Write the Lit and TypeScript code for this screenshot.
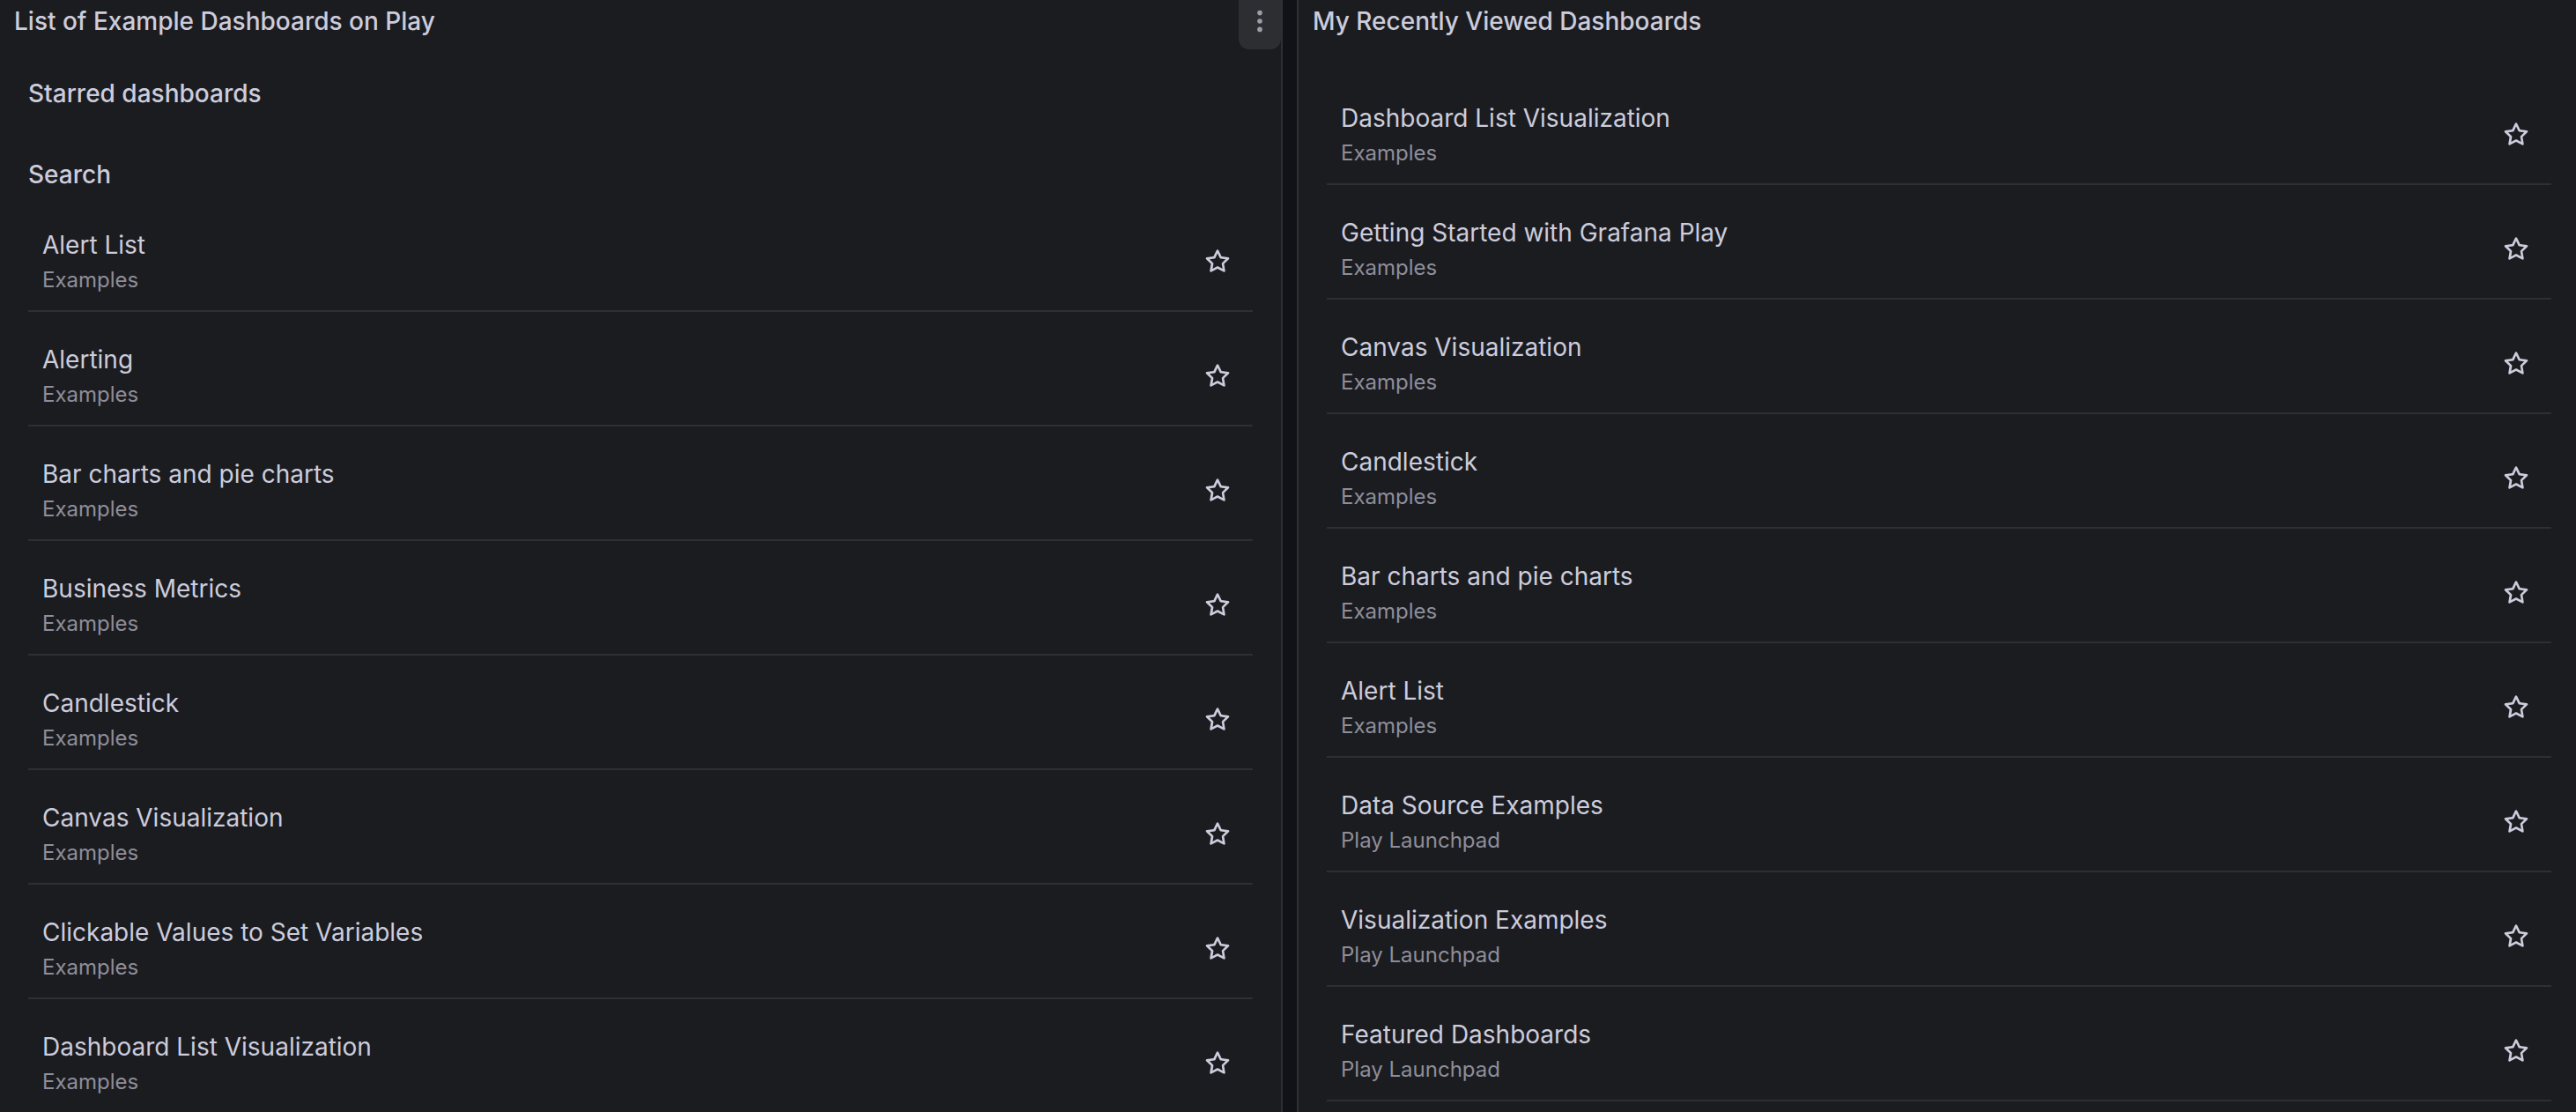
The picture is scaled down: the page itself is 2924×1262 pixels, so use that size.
import { LitElement, html, css } from "lit";
import { customElement, property } from "lit/decorators.js";

interface Dashboard {
  title: string;
  folder: string;
}

const inFolder = (folder: string, titles: string[]): Dashboard[] =>
  titles.map((title) => ({ title, folder }));

const searchResults: Dashboard[] = inFolder("Examples", [
  "Alert List",
  "Alerting",
  "Bar charts and pie charts",
  "Business Metrics",
  "Candlestick",
  "Canvas Visualization",
  "Clickable Values to Set Variables",
  "Dashboard List Visualization",
]);

const recentlyViewed: Dashboard[] = [
  ...inFolder("Examples", [
    "Dashboard List Visualization",
    "Getting Started with Grafana Play",
    "Canvas Visualization",
    "Candlestick",
    "Bar charts and pie charts",
    "Alert List",
  ]),
  ...inFolder("Play Launchpad", [
    "Data Source Examples",
    "Visualization Examples",
    "Featured Dashboards",
  ]),
];

@customElement("dashboard-list")
export class DashboardList extends LitElement {
  @property({ attribute: false }) items: Dashboard[] = [];

  static styles = css`
    :host {
      display: block;
    }
    .list {
      list-style: none;
      margin: 0;
      padding: 0;
    }
    .row {
      display: flex;
      align-items: center;
      justify-content: space-between;
      padding: 32px 24px 16px 16px;
      border-bottom: 2px solid #2e2f33;
    }
    .text {
      display: flex;
      flex-direction: column;
      align-items: flex-start;
      min-width: 0;
    }
    .link {
      color: #ccccdc;
      font-size: 28px;
      line-height: 44px;
      text-decoration: none;
    }
    .link:hover {
      text-decoration: underline;
    }
    .folder {
      color: #8e8e9a;
      font-size: 24px;
      line-height: 36px;
    }
    .star {
      display: flex;
      flex: none;
      padding: 0;
      border: 0;
      background: none;
      color: #ccccdc;
      cursor: pointer;
    }
    .icon {
      width: 32px;
      height: 32px;
      fill: currentColor;
    }
  `;

  render() {
    return html`<ul class="list">
      ${this.items.map(
        (item) => html`<li class="row">
          <div class="text">
            <a class="link" href="#">${item.title}</a>
            <span class="folder">${item.folder}</span>
          </div>
          <button class="star" type="button" aria-label="Mark ${item.title} as favorite">
            <svg class="icon" viewBox="0 0 24 24" aria-hidden="true">
              <path
                d="M22,9.67A1,1,0,0,0,21.14,9l-5.69-.83L12.9,3a1,1,0,0,0-1.8,0L8.55,8.16,2.86,9a1,1,0,0,0-.81.68,1,1,0,0,0,.25,1l4.13,4-1,5.68A1,1,0,0,0,6.9,21.44L12,18.77l5.1,2.67a.93.93,0,0,0,.46.12,1,1,0,0,0,.59-.19,1,1,0,0,0,.4-1l-1-5.68,4.13-4A1,1,0,0,0,22,9.67Zm-6.15,4a1,1,0,0,0-.29.88l.72,4.2-3.76-2a1.06,1.06,0,0,0-.94,0l-3.76,2,.72-4.2a1,1,0,0,0-.29-.88l-3-3,4.21-.61a1,1,0,0,0,.76-.55L12,5.7l1.88,3.82a1,1,0,0,0,.76.55l4.21.61Z"
              />
            </svg>
          </button>
        </li>`
      )}
    </ul>`;
  }
}

@customElement("app-root")
export class AppRoot extends LitElement {
  static styles = css`
    :host {
      display: block;
      height: 100vh;
      overflow: hidden;
      background: #111217;
      color: #ccccdc;
      font-family: Inter, "Liberation Sans", sans-serif;
      font-size: 28px;
      line-height: 44px;
    }
    .board {
      display: grid;
      grid-template-columns: 1fr 1fr;
      gap: 16px;
      height: 100%;
      margin-right: -4px;
    }
    .panel {
      min-width: 0;
      background: #1b1c20;
      overflow: hidden;
    }
    .first {
      border-right: 2px solid #2e2f33;
    }
    .second {
      border-left: 2px solid #2e2f33;
    }
    .header {
      display: flex;
      align-items: flex-start;
      justify-content: space-between;
      height: 56px;
      padding-left: 16px;
    }
    .title,
    .section {
      margin: 0;
      font-size: 28px;
      font-weight: 500;
      line-height: 44px;
    }
    .title {
      padding-top: 2px;
    }
    .menu {
      display: flex;
      align-items: flex-start;
      justify-content: center;
      width: 48px;
      height: 56px;
      padding: 8px 0 0;
      border: 0;
      border-radius: 0 0 12px 12px;
      background: #2d2e32;
      color: #9d9da8;
      cursor: pointer;
    }
    .dots {
      width: 32px;
      height: 32px;
      fill: currentColor;
    }
    .content {
      padding: 28px 32px 0;
    }
    .section {
      padding-bottom: 48px;
    }
    .lead {
      padding-bottom: 4px;
    }
    .recent {
      padding: 24px 32px 0;
    }
  `;

  render() {
    return html`<main class="board">
      <section class="panel first">
        <header class="header">
          <h2 class="title">List of Example Dashboards on Play</h2>
          <button class="menu" type="button" aria-label="Panel menu">
            <svg class="dots" viewBox="0 0 32 32" aria-hidden="true">
              <circle cx="16" cy="6.6" r="2.8" />
              <circle cx="16" cy="16" r="2.8" />
              <circle cx="16" cy="25.4" r="2.8" />
            </svg>
          </button>
        </header>
        <div class="content">
          <h3 class="section">Starred dashboards</h3>
          <h3 class="section lead">Search</h3>
          <dashboard-list .items=${searchResults}></dashboard-list>
        </div>
      </section>
      <section class="panel second">
        <header class="header">
          <h2 class="title">My Recently Viewed Dashboards</h2>
        </header>
        <div class="recent">
          <dashboard-list .items=${recentlyViewed}></dashboard-list>
        </div>
      </section>
    </main>`;
  }
}
